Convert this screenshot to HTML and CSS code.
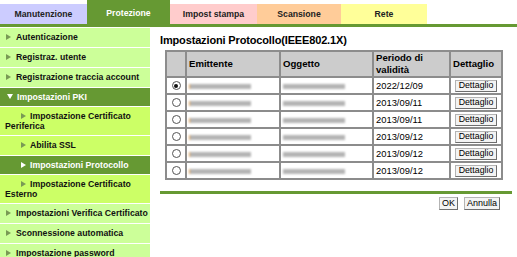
FILE: index.html
```html
<!DOCTYPE html>
<html lang="it">
<head>
<meta charset="utf-8">
<title>Impostazioni Protocollo</title>
<link rel="stylesheet" href="styles.css">
</head>
<body>

<div class="tabs">
  <div class="tab t-manut">Manutenzione</div>
  <div class="tab t-prot">Protezione</div>
  <div class="tab t-stampa">Impost stampa</div>
  <div class="tab t-scan">Scansione</div>
  <div class="tab t-rete">Rete</div>
</div>
<div class="bar"></div>

<div class="page">
  <ul class="menu">
    <li class="item"><span class="arrow"></span>Autenticazione</li>
    <li class="item"><span class="arrow"></span>Registraz. utente</li>
    <li class="item"><span class="arrow"></span>Registrazione traccia account</li>
    <li class="item open"><span class="arrow down"></span>Impostazioni PKI</li>
    <li class="sub two"><span class="arrow"></span>Impostazione Certificato Periferica</li>
    <li class="sub"><span class="arrow"></span>Abilita SSL</li>
    <li class="sub open"><span class="arrow"></span>Impostazioni Protocollo</li>
    <li class="sub two"><span class="arrow"></span>Impostazione Certificato Esterno</li>
    <li class="item"><span class="arrow"></span>Impostazioni Verifica Certificato</li>
    <li class="item"><span class="arrow"></span>Sconnessione automatica</li>
    <li class="item"><span class="arrow"></span>Impostazione password</li>
  </ul>

  <div class="main">
    <h1 class="title">Impostazioni Protocollo(IEEE802.1X)</h1>

    <table class="certs">
      <colgroup>
        <col class="c-sel"><col class="c-emit"><col class="c-ogg"><col class="c-per"><col class="c-det">
      </colgroup>
      <tr>
        <th></th>
        <th>Emittente</th>
        <th>Oggetto</th>
        <th>Periodo di<br>validità</th>
        <th>Dettaglio</th>
      </tr>
      <tr>
        <td class="sel"><span class="radio checked"></span></td>
        <td><span class="blur emit"></span></td>
        <td><span class="blur ogg"></span></td>
        <td>2022/12/09</td>
        <td class="det"><button class="btn">Dettaglio</button></td>
      </tr>
      <tr>
        <td class="sel"><span class="radio"></span></td>
        <td><span class="blur emit"></span></td>
        <td><span class="blur ogg"></span></td>
        <td>2013/09/11</td>
        <td class="det"><button class="btn">Dettaglio</button></td>
      </tr>
      <tr>
        <td class="sel"><span class="radio"></span></td>
        <td><span class="blur emit"></span></td>
        <td><span class="blur ogg"></span></td>
        <td>2013/09/11</td>
        <td class="det"><button class="btn">Dettaglio</button></td>
      </tr>
      <tr>
        <td class="sel"><span class="radio"></span></td>
        <td><span class="blur emit"></span></td>
        <td><span class="blur ogg"></span></td>
        <td>2013/09/12</td>
        <td class="det"><button class="btn">Dettaglio</button></td>
      </tr>
      <tr>
        <td class="sel"><span class="radio"></span></td>
        <td><span class="blur emit"></span></td>
        <td><span class="blur ogg"></span></td>
        <td>2013/09/12</td>
        <td class="det"><button class="btn">Dettaglio</button></td>
      </tr>
      <tr>
        <td class="sel"><span class="radio"></span></td>
        <td><span class="blur emit"></span></td>
        <td><span class="blur ogg"></span></td>
        <td>2013/09/12</td>
        <td class="det"><button class="btn">Dettaglio</button></td>
      </tr>
    </table>

    <div class="line"></div>

    <div class="actions">
      <button class="btn">OK</button>
      <button class="btn">Annulla</button>
    </div>
  </div>
</div>

</body>
</html>
```

FILE: styles.css
```css
body{
  margin:0;
  padding:0;
  background:#fff;
  color:#000;
  font-family:"Liberation Sans", Arial, sans-serif;
}

/* top tabs */
.tabs{
  display:flex;
  align-items:flex-end;
  height:24px;
}
.tab{
  height:20px;
  display:flex;
  align-items:center;
  justify-content:center;
  font-size:8.7px;
  font-weight:bold;
  color:#222;
}
.t-manut{width:87px;background:#ccccff;}
.t-prot{width:83px;height:24px;padding-top:2px;box-sizing:border-box;background:#669933;color:#fff;}
.t-stampa{width:87px;background:#ffcccc;}
.t-scan{width:84px;background:#ffcc99;}
.t-rete{width:86px;background:#ffff99;}
.bar{
  height:3px;
  background:#669933;
  margin-bottom:1px;
}

.page{
  display:flex;
  align-items:flex-start;
}

/* left menu */
.menu{
  list-style:none;
  margin:0;
  padding:0;
  width:150px;
  flex:none;
}
.menu li{
  font-size:8.7px;
  font-weight:bold;
  line-height:10px;
  padding:4px 2px 5px 6px;
  border-bottom:1px solid #fff;
  background:#ccff99;
  color:#111;
}
.menu li.sub{
  background:#ccff66;
  padding-left:5px;
  text-indent:16px;
}
.menu li.two{padding-bottom:4px;}
.menu li.open{
  background:#669933;
  color:#fff;
  padding-bottom:4px;
}
.arrow{
  display:inline-block;
  width:0;
  height:0;
  border-left:5px solid #7a9a55;
  border-top:3px solid transparent;
  border-bottom:3px solid transparent;
  margin-right:5px;
  vertical-align:0;
  text-indent:0;
}
.sub .arrow{margin-right:4px;}
.open .arrow{border-left-color:#fff;}
.arrow.down{
  border-left:3px solid transparent;
  border-right:3px solid transparent;
  border-top:5px solid #fff;
  border-bottom:0;
  margin-left:1px;
  margin-right:4px;
  vertical-align:1px;
}

/* content */
.main{
  flex:1;
  margin-left:10px;
  margin-right:5px;
}
.title{
  margin:6px 0 0 0;
  font-size:11px;
  line-height:13px;
  letter-spacing:-0.15px;
  font-weight:bold;
}

.certs{
  margin:3px 0 0 5px;
  width:338px;
  table-layout:fixed;
  border-collapse:separate;
  border-spacing:2px;
  background:#8c8c8c;
  font-size:9.4px;
}
.c-sel{width:18px;}
.c-emit{width:92px;}
.c-ogg{width:91px;}
.c-per{width:75px;}
.c-det{width:50px;}
.certs th,
.certs td{
  box-sizing:border-box;
  padding:0 0 0 2px;
  text-align:left;
}
.certs th{
  height:23px;
  background:#cccccc;
  font-size:9.6px;
  line-height:12px;
  font-weight:bold;
  vertical-align:middle;
}
.certs td{
  height:15px;
  background:#fff;
  vertical-align:middle;
  white-space:nowrap;
}
.certs td.sel{padding:0;text-align:center;}
.certs td.det{padding:0;text-align:center;}

.radio{
  display:inline-block;
  box-sizing:border-box;
  width:9px;
  height:9px;
  border:1px solid #555;
  border-radius:50%;
  background:#fff;
  vertical-align:middle;
  position:relative;
  top:-1px;
}
.radio.checked::after{
  content:"";
  position:absolute;
  left:1.5px;
  top:1.5px;
  width:4px;
  height:4px;
  border-radius:50%;
  background:#111;
}

.blur{
  display:inline-block;
  height:5px;
  background:#b4b4b4;
  filter:blur(0.8px);
  vertical-align:middle;
}
.blur.emit{
  width:61px;
  border-left:1px solid #f0a850;
}
.blur.ogg{
  width:62px;
}

.btn{
  font-family:"Liberation Sans", Arial, sans-serif;
  font-size:9px;
  line-height:9px;
  height:13px;
  padding:0 2px;
  margin:0;
  background:#f3f3f3;
  color:#000;
  border:1px solid #b4b4b4;
  border-right-color:#6e6e6e;
  border-bottom-color:#6e6e6e;
  border-radius:0;
  vertical-align:middle;
}
.det .btn{width:42px;height:12px;padding:0;font-size:8.8px;}

.line{
  height:3px;
  background:#669933;
  margin-top:11px;
}
.actions{
  display:flex;
  justify-content:flex-end;
  gap:6px;
  margin:3px 12px 0 0;
}
```
